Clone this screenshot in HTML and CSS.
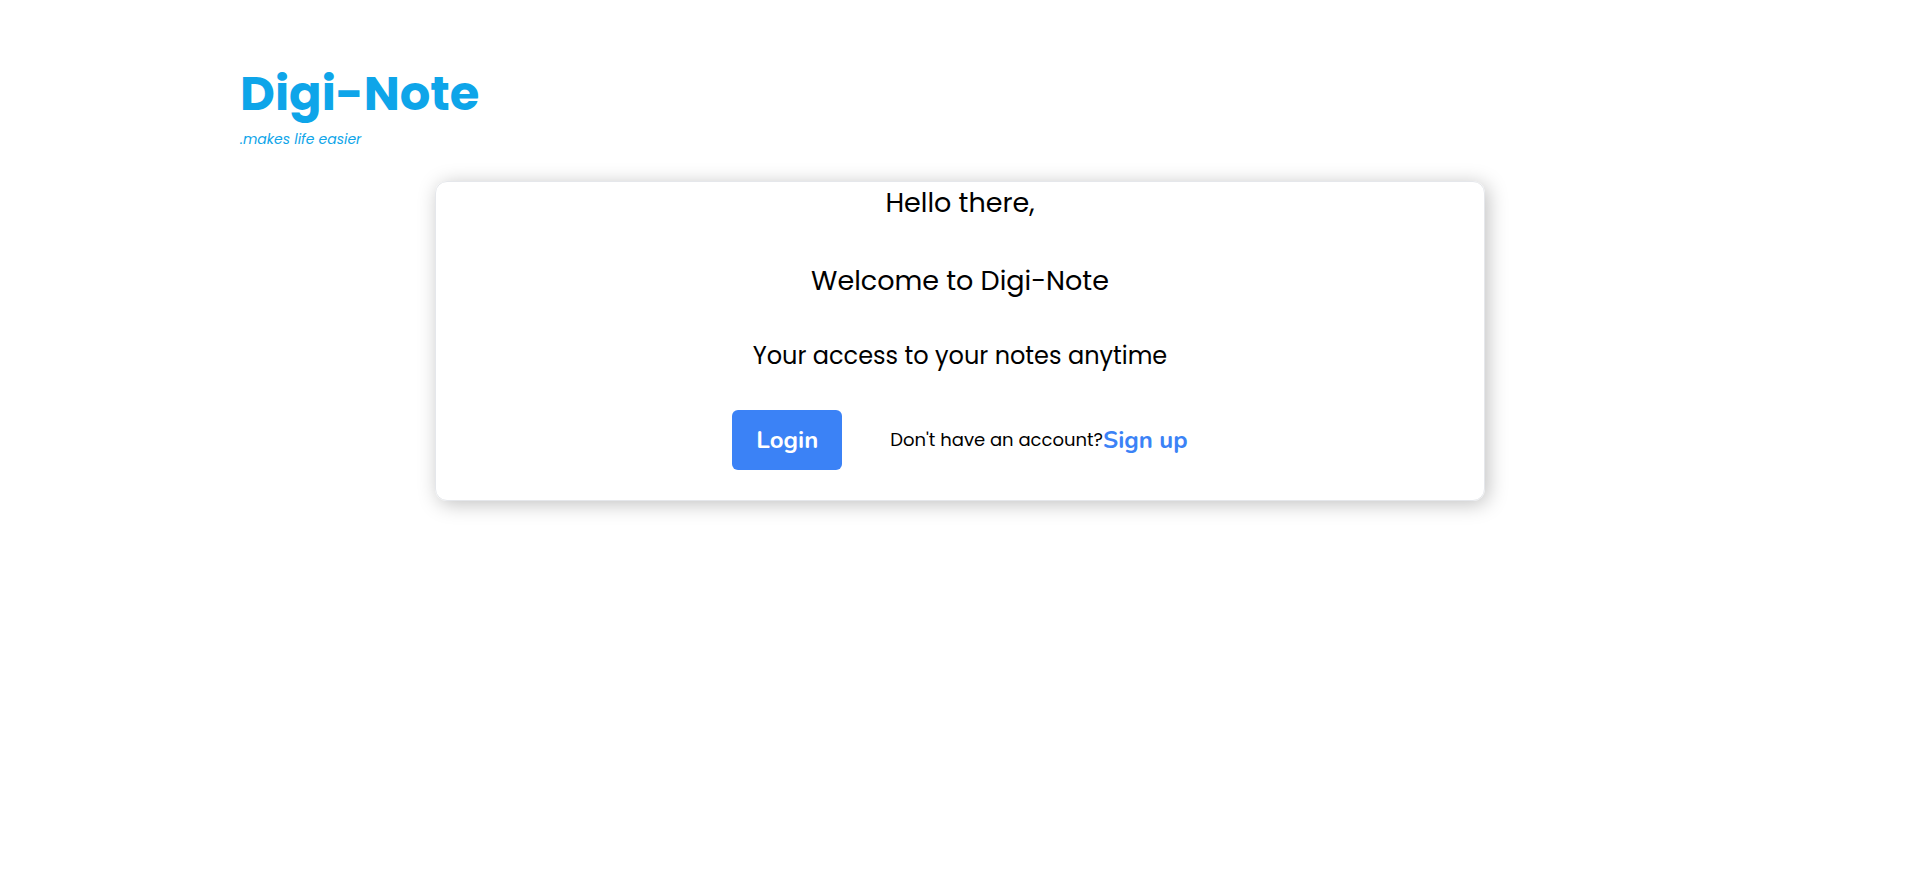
FILE: index.html
```html
<!DOCTYPE html>
<html lang="en">
<head>
<meta charset="utf-8">
<meta name="viewport" content="width=device-width, initial-scale=1">
<title>Digi-Note</title>
<link rel="stylesheet" href="styles.css">
</head>
<body>
<div class="page">
  <header class="brand">
    <h1 class="brand-name">Digi-Note</h1>
    <p class="brand-tagline">.makes life easier</p>
  </header>
  <main class="card">
    <p class="greeting">Hello there,</p>
    <p class="greeting">Welcome to Digi-Note</p>
    <p class="subtitle">Your access to your notes anytime</p>
    <div class="actions">
      <button class="login" type="button">Login</button>
      <p class="signup">Don't have an account?<a class="signup-link" href="#signup">Sign up</a></p>
    </div>
  </main>
</div>
</body>
</html>
```
FILE: styles.css
```css
* {
  box-sizing: border-box;
}

body {
  margin: 0;
  background: #fff;
  color: #000;
  font-family: Poppins, Inter, "Open Sans", sans-serif;
}

h1,
p {
  margin: 0;
}

.page {
  padding: 58px 12.5% 48px;
}

.brand {
  display: flex;
  flex-direction: column;
  margin-bottom: 33px;
}

.brand-name {
  color: #0ea5e9;
  font-size: 48px;
  font-weight: 700;
  line-height: 72px;
}

.brand-tagline {
  color: #0ea5e9;
  font-size: 14px;
  font-style: italic;
  font-weight: 400;
  line-height: 18px;
}

.card {
  display: flex;
  flex-direction: column;
  align-items: center;
  gap: 36px;
  max-width: 1050px;
  margin: 0 auto;
  padding-bottom: 30px;
  border: 1px solid #e5e7eb;
  border-radius: 12px;
  box-shadow: 3px 3px 20px rgba(0, 0, 0, 0.25);
  text-align: center;
}

.greeting {
  font-size: 27px;
  line-height: 42px;
}

.subtitle {
  font-size: 24px;
  line-height: 36px;
}

.actions {
  display: flex;
  flex-wrap: wrap;
  align-items: center;
  justify-content: center;
  gap: 24px 48px;
}

.login {
  padding: 12px 24px;
  border: 0;
  border-radius: 6px;
  background: #3b82f6;
  color: #fff;
  font-family: Nunito, Lato, sans-serif;
  font-size: 24px;
  font-weight: 700;
  line-height: 36px;
}

.signup {
  display: flex;
  flex-wrap: wrap;
  align-items: center;
  justify-content: center;
  font-size: 18px;
  line-height: 30px;
}

.signup-link {
  color: #3b82f6;
  font-family: Nunito, Lato, sans-serif;
  font-size: 24px;
  font-weight: 700;
  text-decoration: none;
}
```
